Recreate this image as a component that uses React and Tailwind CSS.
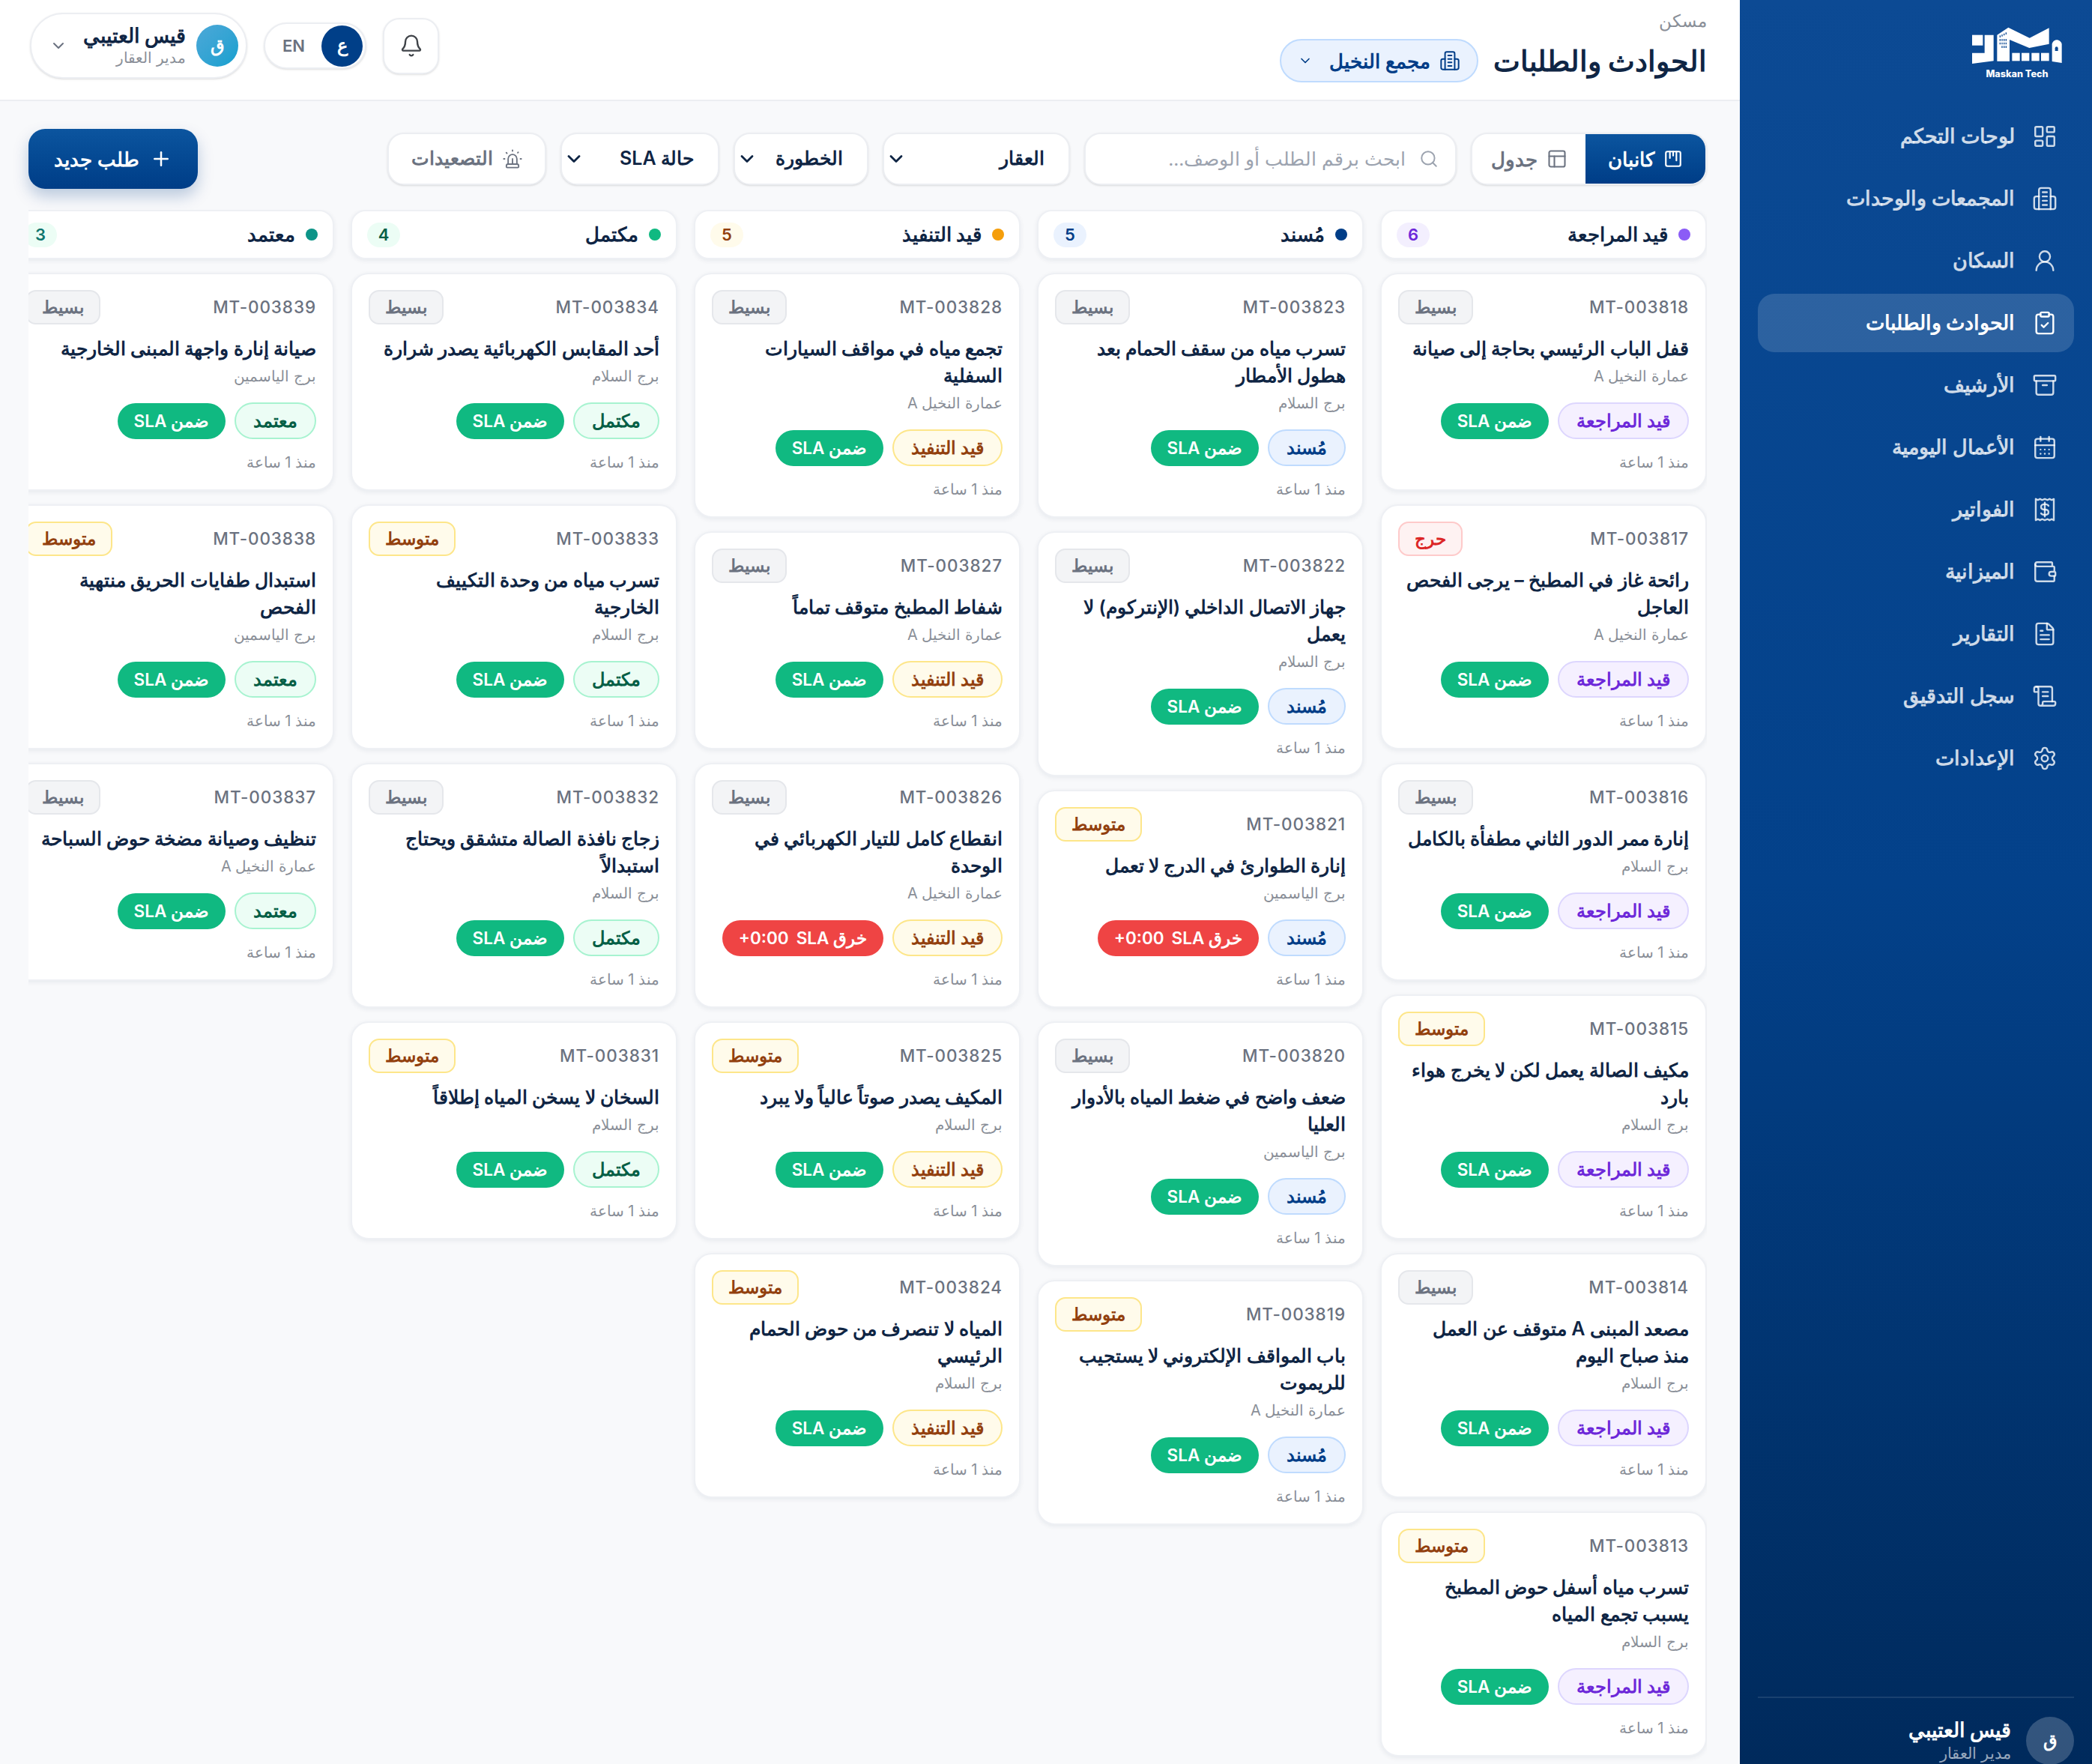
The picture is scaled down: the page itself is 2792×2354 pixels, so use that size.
import React from 'react';
import {
    LayoutDashboard,
    UserRound,
    ClipboardCheck,
    Archive,
    CalendarDays,
    Wallet,
    FileText,
    ScrollText,
    Settings,
    ChevronDown,
    Bell,
    Search,
    PanelsTopLeft,
    Siren,
    Plus,
} from 'lucide-react';

const BuildingIcon = ({ className }) => (
    <svg viewBox="0 0 24 24" fill="none" stroke="currentColor" strokeWidth="1.7" strokeLinecap="round" strokeLinejoin="round" className={className}>
        <path d="M6.5 22V4a2 2 0 0 1 2-2h7a2 2 0 0 1 2 2v18" />
        <path d="M6.5 10H4a2 2 0 0 0-2 2v8a2 2 0 0 0 2 2h16a2 2 0 0 0 2-2v-8a2 2 0 0 0-2-2h-2.5" />
        <path d="M10 6h4M10 10h4M10 14h4M10 18h4" />
    </svg>
);

const ReceiptIcon = ({ className }) => (
    <svg viewBox="0 0 24 24" fill="none" stroke="currentColor" strokeWidth="1.7" strokeLinecap="round" strokeLinejoin="round" className={className}>
        <path d="M3.5 2v20l2-1 2 1 2-1 2.500 1 2.500-1 2 1 2-1 2 1V2l-2 1-2-1-2 1L12 2 9.500 3l-2-1-2 1z" />
        <path d="M15.500 8.500c-.5-1-1.800-1.500-3.500-1.500-2 0-3.500.8-3.500 2.500S10 12 12 12s3.500.8 3.500 2.500S14 17 12 17c-1.700 0-3-.5-3.500-1.500" />
        <path d="M12 5.500v13" />
    </svg>
);

const KanbanIcon = ({ className }) => (
    <svg viewBox="0 0 24 24" fill="none" stroke="currentColor" strokeWidth="2" strokeLinecap="round" strokeLinejoin="round" className={className}>
        <rect x="3" y="3" width="18" height="18" rx="2" />
        <path d="M8 3v8M12 3v5M16 3v11" />
    </svg>
);

const Logo = () => (
    <svg viewBox="0 0 420 240" className="w-[140px] h-[80px]">
        <g fill="#ffffff">
            <rect x="30" y="50" width="43" height="42" />
            <path d="M80 50h36v104l-86 11v-43h50z" />
            <path d="M130 155V50l45-30 85 42 78-40v64l-79 16-79-33v86z" />
            <rect x="190" y="122" width="31" height="32" />
            <rect x="228" y="122" width="31" height="32" />
            <rect x="268" y="122" width="31" height="32" />
            <rect x="306" y="122" width="32" height="32" />
            <path d="M350 156V88c0-10 10-18 19-18s20 8 20 18v74z" />
        </g>
        <g fill="#0c4a94">
            <path d="M140 52h4v8h-4zM148 48h4v8h-4zM156 44h4v8h-4zM164 40h4v8h-4zM140 66h4v8h-4zM148 66h4v8h-4zM156 66h4v8h-4zM164 66h4v8h-4zM140 80h4v8h-4zM148 80h4v8h-4zM156 80h4v8h-4zM164 80h4v8h-4zM148 94h4v8h-4zM156 94h4v8h-4zM164 94h4v8h-4z" />
            <path d="M362 114v-11a6 6 0 0 1 12 0v11z" />
        </g>
        <text x="210" y="218" textAnchor="middle" fill="#ffffff" fontSize="38" fontWeight="800" fontFamily="Inter, sans-serif">Maskan Tech</text>
    </svg>
);

const navItems = [
    { label: 'لوحات التحكم', icon: LayoutDashboard },
    { label: 'المجمعات والوحدات', icon: BuildingIcon },
    { label: 'السكان', icon: UserRound },
    { label: 'الحوادث والطلبات', icon: ClipboardCheck, active: true },
    { label: 'الأرشيف', icon: Archive },
    { label: 'الأعمال اليومية', icon: CalendarDays },
    { label: 'الفواتير', icon: ReceiptIcon },
    { label: 'الميزانية', icon: Wallet },
    { label: 'التقارير', icon: FileText },
    { label: 'سجل التدقيق', icon: ScrollText },
    { label: 'الإعدادات', icon: Settings },
];

const severityStyles = {
    'بسيط': 'bg-[#f3f4f6] border-[#e5e7eb] text-[#6b7280]',
    'متوسط': 'bg-[#fffbeb] border-[#fde68a] text-[#92400e]',
    'حرج': 'bg-[#fef2f2] border-[#fecaca] text-[#dc2626]',
};

const S = 'بسيط';
const M = 'متوسط';
const C = 'حرج';
const NAKHEEL = 'عمارة النخيل A';
const SALAM = 'برج السلام';
const YASMIN = 'برج الياسمين';

const columns = [
    {
        title: 'قيد المراجعة',
        dot: 'bg-[#8b5cf6]',
        count: 'bg-[#f3effe] text-[#6d28d9]',
        pill: 'bg-[#f5f0ff] border-[#ddd6fe] text-[#6d28d9]',
        cards: [
            ['MT-003818', S, 'قفل الباب الرئيسي بحاجة إلى صيانة', NAKHEEL],
            ['MT-003817', C, 'رائحة غاز في المطبخ – يرجى الفحص العاجل', NAKHEEL],
            ['MT-003816', S, 'إنارة ممر الدور الثاني مطفأة بالكامل', SALAM],
            ['MT-003815', M, 'مكيف الصالة يعمل لكن لا يخرج هواء بارد', SALAM],
            ['MT-003814', S, 'مصعد المبنى A متوقف عن العمل منذ\u00a0صباح اليوم', SALAM],
            ['MT-003813', M, 'تسرب مياه أسفل حوض المطبخ يسبب تجمع المياه', SALAM],
        ],
    },
    {
        title: 'مُسند',
        dot: 'bg-[#003d87]',
        count: 'bg-[#eaf2fe] text-[#003d87]',
        pill: 'bg-[#eaf2fe] border-[#bfdbfe] text-[#003d87]',
        cards: [
            ['MT-003823', S, 'تسرب مياه من سقف الحمام بعد هطول الأمطار', SALAM],
            ['MT-003822', S, 'جهاز الاتصال الداخلي (الإنتركوم) لا يعمل', SALAM],
            ['MT-003821', M, 'إنارة الطوارئ في الدرج لا تعمل', YASMIN, true],
            ['MT-003820', S, 'ضعف واضح في ضغط المياه بالأدوار العليا', YASMIN],
            ['MT-003819', M, 'باب المواقف الإلكتروني لا يستجيب للريموت', NAKHEEL],
        ],
    },
    {
        title: 'قيد التنفيذ',
        dot: 'bg-[#f59e0b]',
        count: 'bg-[#fffbeb] text-[#92400e]',
        pill: 'bg-[#fffbeb] border-[#fde68a] text-[#92400e]',
        cards: [
            ['MT-003828', S, 'تجمع مياه في مواقف السيارات السفلية', NAKHEEL],
            ['MT-003827', S, 'شفاط المطبخ متوقف تماماً', NAKHEEL],
            ['MT-003826', S, 'انقطاع كامل للتيار الكهربائي في الوحدة', NAKHEEL, true],
            ['MT-003825', M, 'المكيف يصدر صوتاً عالياً ولا يبرد', SALAM],
            ['MT-003824', M, 'المياه لا تنصرف من حوض الحمام الرئيسي', SALAM],
        ],
    },
    {
        title: 'مكتمل',
        dot: 'bg-[#10b981]',
        count: 'bg-[#ecfdf5] text-[#065f46]',
        pill: 'bg-[#ecfdf5] border-[#a7f3d0] text-[#065f46]',
        cards: [
            ['MT-003834', S, 'أحد المقابس الكهربائية يصدر شرارة', SALAM],
            ['MT-003833', M, 'تسرب مياه من وحدة التكييف الخارجية', SALAM],
            ['MT-003832', S, 'زجاج نافذة الصالة متشقق ويحتاج استبدالاً', SALAM],
            ['MT-003831', M, 'السخان لا يسخن المياه إطلاقاً', SALAM],
        ],
    },
    {
        title: 'معتمد',
        dot: 'bg-[#0d9488]',
        count: 'bg-[#ecfdf5] text-[#0f766e]',
        pill: 'bg-[#ecfdf5] border-[#a7f3d0] text-[#065f46]',
        cards: [
            ['MT-003839', S, 'صيانة إنارة واجهة المبنى الخارجية', YASMIN],
            ['MT-003838', M, 'استبدال طفايات الحريق منتهية الفحص', YASMIN],
            ['MT-003837', S, 'تنظيف وصيانة مضخة حوض السباحة', NAKHEEL],
        ],
    },
];

const Sidebar = () => (
    <aside className="w-[470px] shrink-0 h-full flex flex-col bg-gradient-to-b from-[#0c4a94] via-[#03418a] to-[#002a5c]">
        <div className="h-[134px] flex justify-start items-start pr-[30px] pt-[30px]">
            <Logo />
        </div>
        <nav className="flex flex-col gap-[5px] px-[24px] mt-[9px]">
            {navItems.map(item => {
                const Icon = item.icon;
                return (
                    <div
                        key={item.label}
                        className={`h-[78px] rounded-[22px] flex items-center gap-[23px] pr-[22px] text-[26.5px] ${item.active ? 'bg-white/15 text-white font-bold' : 'text-white/80 font-semibold'}`}
                    >
                        <Icon className="w-[34px] h-[34px] shrink-0" strokeWidth={1.7} />
                        <span>{item.label}</span>
                    </div>
                );
            })}
        </nav>
        <div className="mt-auto mx-[24px] border-t-2 border-white/10 pt-[25px] flex items-center gap-[20px] h-[90px]">
            <div className="w-[64px] h-[64px] rounded-full bg-white/20 text-white font-bold text-[24px] flex items-center justify-center shrink-0">ق</div>
            <div>
                <div className="text-white font-bold text-[27px] leading-[34px]">قيس العتيبي</div>
                <div className="text-white/60 text-[21px] leading-[28px]">مدير العقار</div>
            </div>
        </div>
    </aside>
);

const TopBar = () => (
    <header className="h-[135px] shrink-0 bg-white border-b-2 border-[#eceef2] flex items-start justify-between pr-[44px] pl-[40px]">
        <div className="pt-[14px]">
            <div className="text-[22.5px] leading-[28px] text-[#8a8f98]">مسكن</div>
            <div className="flex items-center gap-[20px] mt-[10px]">
                <h1 className="text-[38px] leading-[50px] font-bold text-[#0f2544]">الحوادث والطلبات</h1>
                <div className="h-[58px] w-[265px] rounded-full border-2 border-[#bfdbfe] bg-[#eaf2fe] text-[#003d87] flex items-center justify-center gap-[12px] text-[26px] font-semibold">
                    <BuildingIcon className="w-[28px] h-[28px]" />
                    <span>مجمع النخيل</span>
                    <ChevronDown className="w-[20px] h-[20px] mr-[10px]" />
                </div>
            </div>
        </div>
        <div className="flex items-center gap-[22px] pt-[17px]">
            <div className="w-[75px] h-[75px] rounded-[22px] border-2 border-[#eceef2] bg-white shadow-sm flex items-center justify-center text-[#3f4348]">
                <Bell className="w-[32px] h-[32px]" strokeWidth={1.8} />
            </div>
            <div className="w-[137px] h-[62px] rounded-full border-2 border-[#eceef2] bg-white shadow-sm flex items-center justify-between pr-[3px] pl-[23px]">
                <div className="w-[55px] h-[55px] rounded-full bg-[#003f88] text-white font-bold text-[24px] flex items-center justify-center">ع</div>
                <span className="text-[22px] font-semibold text-[#6b7280]">EN</span>
            </div>
            <div className="w-[290px] h-[88px] rounded-full border-2 border-[#eceef2] bg-white shadow-sm flex items-center pr-[10px] pl-[24px] gap-[14px]">
                <div className="w-[56px] h-[56px] rounded-full bg-gradient-to-br from-[#4ba8d8] to-[#0ea0cf] text-white font-bold text-[24px] flex items-center justify-center shrink-0">ق</div>
                <div className="flex-1">
                    <div className="text-[27px] leading-[32px] font-bold text-[#0f2544]">قيس العتيبي</div>
                    <div className="text-[20px] leading-[26px] text-[#8a8f98]">مدير العقار</div>
                </div>
                <ChevronDown className="w-[24px] h-[24px] text-[#6b7280]" />
            </div>
        </div>
    </header>
);

const Dropdown = ({ label, className }) => (
    <div className={`h-[70px] rounded-[22px] border-2 border-[#eceef2] bg-white shadow-sm flex items-center justify-between pr-[32px] pl-[2px] text-[25px] font-semibold text-[#0f2544] ${className}`}>
        <span>{label}</span>
        <ChevronDown className="w-[28px] h-[28px]" strokeWidth={2.4} />
    </div>
);

const Toolbar = () => (
    <div className="flex items-center justify-between h-[80px]">
        <div className="flex items-center gap-[19px]">
            <div className="w-[315px] h-[70px] rounded-[22px] border-2 border-[#eceef2] bg-white shadow-sm overflow-hidden flex">
                <div className="w-[160px] bg-gradient-to-b from-[#0c559f] to-[#003d87] text-white flex items-center justify-center gap-[12px] text-[26px] font-semibold">
                    <KanbanIcon className="w-[26px] h-[26px]" />
                    <span>كانبان</span>
                </div>
                <div className="flex-1 text-[#6b7280] flex items-center justify-center gap-[12px] text-[26px] font-semibold">
                    <PanelsTopLeft className="w-[28px] h-[28px]" strokeWidth={1.8} />
                    <span>جدول</span>
                </div>
            </div>
            <div className="w-[497px] h-[70px] rounded-[22px] border-2 border-[#eceef2] bg-white shadow-sm flex items-center gap-[18px] pr-[22px] text-[24.5px] text-[#9ca3af]">
                <Search className="w-[26px] h-[26px]" strokeWidth={1.8} />
                <span>ابحث برقم الطلب أو الوصف...</span>
            </div>
            <Dropdown label="العقار" className="w-[250px]" />
            <Dropdown label="الخطورة" className="w-[180px]" />
            <Dropdown label="حالة SLA" className="w-[212px]" />
            <div className="w-[212px] h-[70px] rounded-[22px] border-2 border-[#eceef2] bg-white shadow-sm flex items-center justify-center gap-[12px] text-[25px] font-semibold text-[#6b7280]">
                <Siren className="w-[28px] h-[28px]" strokeWidth={1.6} />
                <span>التصعيدات</span>
            </div>
        </div>
        <div className="w-[226px] h-[80px] rounded-[22px] bg-gradient-to-b from-[#0c559f] to-[#003d87] text-white shadow-[0_10px_20px_rgba(3,61,135,0.25)] flex items-center justify-center gap-[14px] text-[26px] font-bold">
            <Plus className="w-[30px] h-[30px]" strokeWidth={2} />
            <span>طلب جديد</span>
        </div>
    </div>
);

const Ticket = ({ card, column }) => {
    const [id, severity, title, place, breached] = card;
    return (
        <div className="shrink-0 rounded-[24px] border-2 border-[#eef0f4] bg-white shadow-[0_2px_6px_rgba(15,37,68,0.07)] pt-[21px] pb-[21px] px-[22px]">
            <div className="flex items-center justify-between h-[46px]">
                <span dir="ltr" className="text-[22.5px] font-medium tracking-[0.04em] text-[#6b7280]">{id}</span>
                <span className={`h-[46px] px-[20px] rounded-[14px] border-2 flex items-center text-[23px] font-semibold ${severityStyles[severity]}`}>{severity}</span>
            </div>
            <div className="mt-[14px] text-[25px] leading-[36px] font-semibold text-[#0f2544]">{title}</div>
            <div className="mt-[4px] text-[20px] leading-[30px] text-[#8a8f98]">{place}</div>
            <div className="mt-[20px] flex items-center gap-[12px]">
                <span className={`h-[49px] px-[23px] rounded-full border-2 flex items-center text-[23.5px] font-semibold ${column.pill}`}>{column.title}</span>
                {breached ? (
                    <span className="h-[48px] px-[22px] rounded-full bg-[#ef4444] text-white flex items-center text-[22.5px] font-semibold whitespace-nowrap">
                        <span>خرق SLA</span>
                        <span dir="ltr" className="mr-[10px]">+0:00</span>
                    </span>
                ) : (
                    <span className="h-[48px] px-[22px] rounded-full bg-[#10b981] text-white flex items-center text-[22.5px] font-semibold">ضمن SLA</span>
                )}
            </div>
            <div className="mt-[16px] text-[20px] leading-[30px] text-[#8a8f98]">منذ 1 ساعة</div>
        </div>
    );
};

const Column = ({ column }) => (
    <div className="w-[436px] shrink-0 flex flex-col gap-[18px]">
        <div className="shrink-0 h-[66px] rounded-[20px] border-2 border-[#eef0f4] bg-white shadow-[0_2px_6px_rgba(15,37,68,0.07)] flex items-center gap-[14px] px-[20px]">
            <span className={`w-[16px] h-[16px] rounded-full ${column.dot}`} />
            <span className="flex-1 text-[25.5px] font-semibold text-[#0f2544]">{column.title}</span>
            <span className={`w-[44px] h-[33px] rounded-full flex items-center justify-center text-[22px] font-semibold ${column.count}`}>{column.cards.length}</span>
        </div>
        {column.cards.map(card => (
            <Ticket key={card[0]} card={card} column={column} />
        ))}
    </div>
);

const App = () => {
    return (
        <div dir="rtl" className="w-[2792px] h-[2354px] overflow-hidden flex bg-[#f8f9fb] font-['Inter','Noto_Sans',sans-serif]">
            <Sidebar />
            <main className="flex-1 min-w-0 flex flex-col">
                <TopBar />
                <div className="flex-1 min-h-0 pr-[44px] pl-[38px] pt-[37px] flex flex-col gap-[28px]">
                    <Toolbar />
                    <div className="flex-1 min-h-0 overflow-hidden flex gap-[22px] pb-[10px]">
                        {columns.map(column => (
                            <Column key={column.title} column={column} />
                        ))}
                    </div>
                </div>
            </main>
        </div>
    );
};

export default App;
